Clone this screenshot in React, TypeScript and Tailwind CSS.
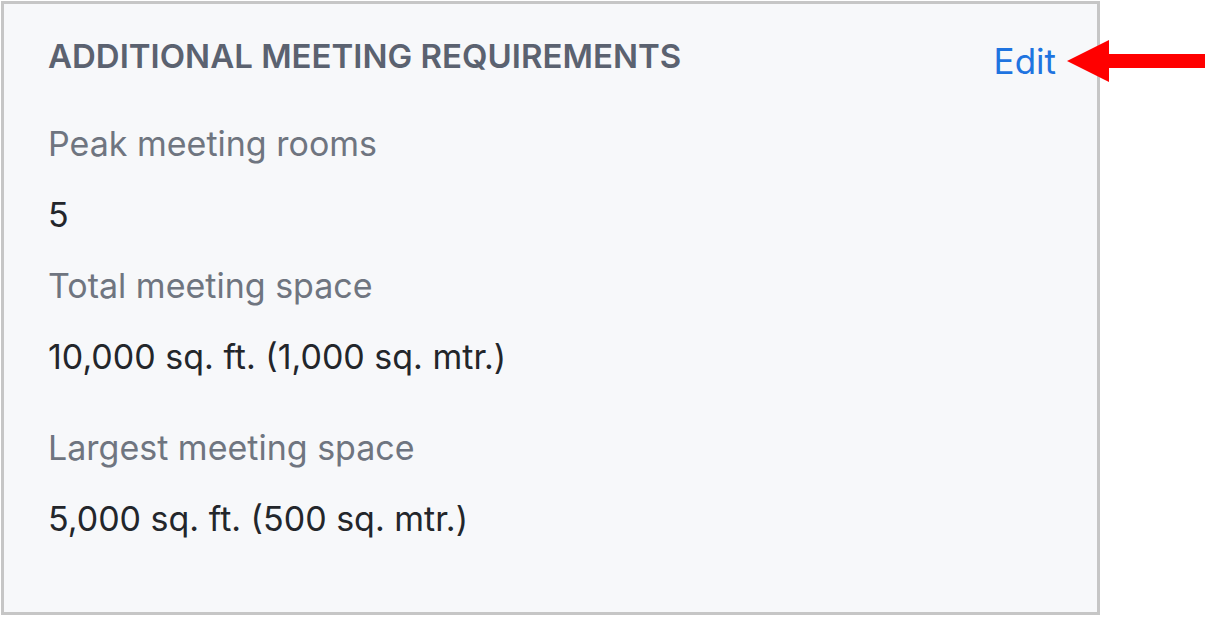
import React from "react";

const rows: { label: string; value: string; extra?: boolean }[] = [
  { label: "Peak meeting rooms", value: "5" },
  { label: "Total meeting space", value: "10,000 sq. ft. (1,000 sq. mtr.)" },
  { label: "Largest meeting space", value: "5,000 sq. ft. (500 sq. mtr.)", extra: true },
];

export default function App() {
  return (
    <div
      className="relative w-[1205px] h-[617px] bg-white pl-[1px] pt-[1px]"
      style={{ fontFamily: "Inter, 'Noto Sans', sans-serif" }}
    >
      <div className="w-[1099px] h-[614px] border-[3px] border-[#c6c6c6] bg-[#f7f8fa] pl-[44px] pr-[41px] pt-[17px]">
        <div className="flex items-start justify-between">
          <div className="text-[33px] leading-[71px] font-semibold text-[#5b6270]">
            ADDITIONAL MEETING REQUIREMENTS
          </div>
          <a className="text-[35px] leading-[71px] mt-[5px] text-[#1f74e0]">Edit</a>
        </div>
        <div className="mt-[11px] flex flex-col">
          {rows.map((r) => (
            <div key={r.label} className={r.extra ? "mt-[20px]" : ""}>
              <div className="text-[34px] leading-[71px] text-[#6f7580]">{r.label}</div>
              <div className="text-[34px] leading-[71px] text-[#23262b]">{r.value}</div>
            </div>
          ))}
        </div>
      </div>
      <svg
        className="absolute left-[1066px] top-[39px]"
        width="139"
        height="44"
        viewBox="0 0 139 44"
      >
        <polygon points="1,22 43,1 43,15 139,15 139,29 43,29 43,43" fill="#ff0000" />
      </svg>
    </div>
  );
}
